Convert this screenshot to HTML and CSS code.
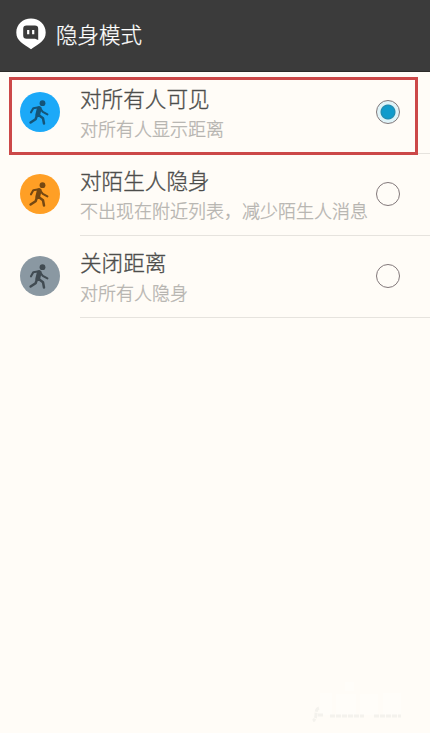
FILE: index.html
```html
<!DOCTYPE html>
<html lang="zh-CN">
<head>
<meta charset="utf-8">
<title>隐身模式</title>
<link rel="stylesheet" href="styles.css">
</head>
<body>
<svg class="defs" width="0" height="0" aria-hidden="true">
  <symbol id="walker" viewBox="0 0 40 40">
    <circle cx="22.500" cy="11.200" r="2.900" fill="currentColor"/>
    <g fill="none" stroke="currentColor" stroke-linecap="round" stroke-linejoin="round">
      <path d="M11 20.300L13.300 16.300L19 15.200L22.800 19.800L27.400 22.300" stroke-width="2.100"/>
      <path d="M19.200 16.700L17.800 22.500" stroke-width="4.800"/>
      <path d="M17.200 22.800L15.600 27.200L10.600 30.500M18.300 22.800L23 26.200L24 31.400" stroke-width="2.500"/>
    </g>
  </symbol>
</svg>
<header class="bar">
  <svg class="logo" viewBox="0 0 30 32">
    <path d="M15 .5C6.800 .5 .3 6.500 .3 14.500c0 8.300 7 11.500 14.700 16.700C22.700 26 29.700 22.800 29.700 14.500 29.700 6.500 23.200 .5 15 .5z" fill="#fff"/>
    <path d="M10.500 7.500h8.400q3.300 0 3.300 3.300v11.200l-3.200-1.300h-8.500q-3.300 0-3.300-3.300v-6.600q0-3.300 3.300-3.300z" fill="#3b3b3b"/>
    <path d="M12.200 12v4.200M17.200 12v4.200" stroke="#fff" stroke-width="2.200"/>
  </svg>
  <h1 class="heading">隐身模式</h1>
</header>
<main class="list">
  <section class="row selected">
    <span class="avatar blue"><svg viewBox="0 0 40 40"><use href="#walker"/></svg></span>
    <div class="content">
      <div class="text"><h2 class="name">对所有人可见</h2><p class="note">对所有人显示距离</p></div>
      <span class="radio on"></span>
    </div>
  </section>
  <section class="row">
    <span class="avatar orange"><svg viewBox="0 0 40 40"><use href="#walker"/></svg></span>
    <div class="content">
      <div class="text"><h2 class="name">对陌生人隐身</h2><p class="note">不出现在附近列表，减少陌生人消息</p></div>
      <span class="radio"></span>
    </div>
  </section>
  <section class="row">
    <span class="avatar gray"><svg viewBox="0 0 40 40"><use href="#walker"/></svg></span>
    <div class="content">
      <div class="text"><h2 class="name">关闭距离</h2><p class="note">对所有人隐身</p></div>
      <span class="radio"></span>
    </div>
  </section>
</main>
<svg class="mark" viewBox="0 0 100 50" aria-hidden="true">
  <path d="M10 16h12v22H10zM26 17h20v21H26zM50 17h18v21H50zM73 16h18v22H73zM35 5h9v9h-9z" fill="#fff" opacity=".3"/>
  <path d="M9 31q-3 1-3 6t-3 7M8 38h5M20 39h34M64 39h27" fill="none" stroke="#f4f2ed" stroke-width="3" stroke-dasharray="5 1"/>
</svg>
</body>
</html>
```
FILE: styles.css
```css
*,
*::after {
  box-sizing: border-box;
  margin: 0;
}

body {
  position: relative;
  height: 733px;
  overflow: hidden;
  background: #fffcf7;
  font-family: "Noto Sans CJK SC", sans-serif;
}

.defs {
  position: absolute;
}

.bar {
  display: flex;
  align-items: center;
  gap: 10px;
  height: 72px;
  padding: 0 16px 3px;
  background: #3b3b3b;
  border-bottom: 1px solid #2d2b29;
}

.logo {
  width: 30px;
  height: 32px;
}

.heading {
  color: #fff;
  font-size: 21.500px;
  font-weight: 300;
  line-height: 32px;
  -webkit-text-stroke: 0.250px currentColor;
}

.row {
  position: relative;
  display: flex;
  height: 82px;
  padding-left: 20px;
  gap: 20px;
}

.selected::after {
  content: "";
  position: absolute;
  left: 9px;
  top: 5px;
  width: 409px;
  height: 78px;
  border: 3px solid #cc4848;
}

.avatar {
  width: 40px;
  height: 40px;
  margin-top: 20px;
  border-radius: 50%;
}

.avatar svg {
  display: block;
}

.blue {
  background: #1ca9f8;
  color: #145479;
}

.orange {
  background: #ff9f25;
  color: #754812;
}

.gray {
  background: #8a98a2;
  color: #414b52;
}

.content {
  flex: 1;
  display: flex;
  justify-content: space-between;
  padding-right: 30px;
  border-bottom: 1px solid #e6e3de;
}

.text {
  width: 295px;
  padding-top: 10px;
  white-space: nowrap;
}

.name {
  color: #4d4d4b;
  font-size: 21.600px;
  font-weight: 300;
  line-height: 32px;
  -webkit-text-stroke: 0.350px currentColor;
}

.note {
  color: #b5b3af;
  font-size: 18px;
  font-weight: 300;
  line-height: 28px;
  -webkit-text-stroke: 0.300px currentColor;
}

.radio {
  width: 24px;
  height: 24px;
  margin-top: 28px;
  border: 1px solid #82787a;
  border-radius: 50%;
}

.on {
  background: radial-gradient(circle, #109bcc 0 5.500px, #238caf 7px, #dff3f8 8px 11px);
}

.mark {
  position: absolute;
  left: 310px;
  top: 677px;
  width: 100px;
  height: 50px;
}
```
